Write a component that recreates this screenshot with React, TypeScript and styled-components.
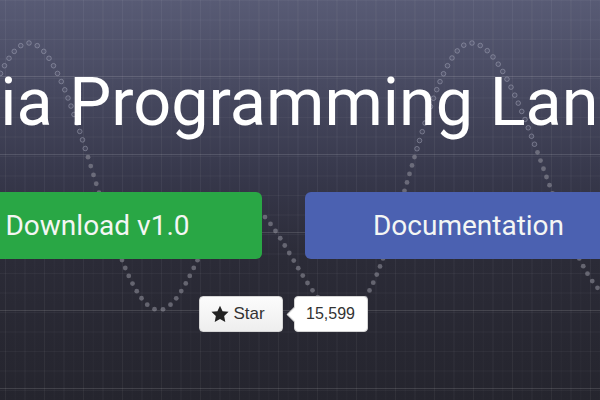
import styled, { createGlobalStyle } from "styled-components";

const GlobalStyle = createGlobalStyle`
    html, body {
        margin: 0;
        padding: 0;
        background: #25252e;
    }
`

const Page = styled.main`
    position: relative;
    width: 600px;
    height: 400px;
    overflow: hidden;
    background-color: #2a2a34;
    background-image:
        linear-gradient(to bottom, rgba(255, 255, 255, 0.13) 1px, transparent 1px),
        linear-gradient(to bottom, rgba(255, 255, 255, 0.04) 1px, transparent 1px),
        linear-gradient(to right, rgba(255, 255, 255, 0.03) 1px, transparent 1px),
        linear-gradient(to right, rgba(255, 255, 255, 0.02) 1px, transparent 1px),
        linear-gradient(180deg, #585b75 0%, #474960 22%, #36374a 45%, #2b2b37 65%, #25252e 100%);
    background-size: 100% 78px, 100% 19.5px, 19.5px 100%, 9.75px 100%, 100% 100%;
    background-position: 0 76px, 0 0, 5px 0, 5px 0, 0 0;
`

const WaveCanvas = styled.svg`
    position: absolute;
    inset: 0;
    width: 600px;
    height: 400px;
    pointer-events: none;
`

const Hero = styled.section`
    position: relative;
    width: 1000px;
    margin-left: -217px;
    padding-top: 62px;
    display: flex;
    flex-direction: column;
    align-items: center;
    font-family: Roboto, "Liberation Sans", sans-serif;
`

const Title = styled.h1`
    margin: 0 2px 0 0;
    font-size: 66.6px;
    font-weight: 400;
    line-height: 80px;
    color: #ffffff;
    white-space: nowrap;
`

const ButtonRow = styled.div`
    display: flex;
    gap: 43px;
    margin-top: 50px;
`

const BigButton = styled.a<{ $color: string }>`
    width: 328px;
    height: 67px;
    display: flex;
    align-items: center;
    justify-content: center;
    border-radius: 6px;
    background: ${props => props.$color};
    color: #f4f6f4;
    font-size: 28px;
    text-decoration: none;
`

const StarRow = styled.div`
    display: flex;
    gap: 11px;
    margin-top: 37px;
    font-family: "Liberation Sans", Arial, sans-serif;
    font-size: 16px;
    color: #333;
`

const StarButton = styled.div`
    width: 84px;
    height: 36px;
    box-sizing: border-box;
    display: flex;
    align-items: center;
    gap: 5px;
    padding-left: 11px;
    border: 1px solid #d5d5d5;
    border-radius: 4px;
    background: linear-gradient(180deg, #fcfcfc 0%, #eeeeee 100%);
    font-size: 17px;

    svg {
        width: 18px;
        height: 18px;
        fill: #222;
    }
`

const CountBox = styled.div`
    position: relative;
    width: 74px;
    height: 36px;
    box-sizing: border-box;
    display: flex;
    align-items: center;
    justify-content: center;
    border: 1px solid #d4d4d4;
    border-radius: 4px;
    background: #fff;

    &::before {
        content: "";
        position: absolute;
        left: -6px;
        top: 12px;
        width: 10px;
        height: 10px;
        background: #fff;
        border-left: 1px solid #d4d4d4;
        border-bottom: 1px solid #d4d4d4;
        transform: rotate(45deg);
    }
`

// extrema of the dotted wave, eased with cosine between them
const extrema: [number, number][] = [
    [-101, 310], [29, 43], [159, 310], [240, 202], [345, 315], [471, 43], [618, 300],
]

function waveY(x: number) {
    for (let i = 0; i < extrema.length - 1; i++) {
        const [x0, y0] = extrema[i];
        const [x1, y1] = extrema[i + 1];
        if (x >= x0 && x <= x1) {
            const t = (x - x0) / (x1 - x0);
            return y0 + (y1 - y0) * (1 - Math.cos(Math.PI * t)) / 2;
        }
    }
    return 300;
}

function waveDots() {
    const dots: { x: number, y: number }[] = [];
    let last = { x: -10, y: waveY(-10) };
    dots.push(last);
    for (let x = -10; x < 610; x += 0.25) {
        const y = waveY(x);
        if (Math.hypot(x - last.x, y - last.y) >= 8.5) {
            last = { x, y };
            dots.push(last);
        }
    }
    return dots;
}

function Wave() {
    const dots = waveDots();
    return (
        <WaveCanvas viewBox="0 0 600 400">
            {dots.map((d, i) => {
                const hollow = d.y < 150;
                return hollow ? (
                    <circle key={i} cx={d.x} cy={d.y} r={2.3} fill="rgba(150,152,170,0.12)" stroke="rgba(175,177,195,0.45)" strokeWidth={1} />
                ) : (
                    <circle key={i} cx={d.x} cy={d.y} r={2.4} fill="rgba(150,150,160,0.55)" />
                );
            })}
        </WaveCanvas>
    )
}

export default function App() {
    return (
        <Page>
            <GlobalStyle />
            <Wave />
            <Hero>
                <Title>The Julia Programming Language</Title>
                <ButtonRow>
                    <BigButton $color="#29a745">Download v1.0</BigButton>
                    <BigButton $color="#4b61b1">Documentation</BigButton>
                </ButtonRow>
                <StarRow>
                    <StarButton>
                        <svg viewBox="0 0 16 16">
                            <path d="M8 .6l2.3 4.9 5.3.6-3.9 3.7 1 5.3L8 12.5l-4.7 2.6 1-5.3L.4 6.1l5.3-.6z" />
                        </svg>
                        Star
                    </StarButton>
                    <CountBox>15,599</CountBox>
                </StarRow>
            </Hero>
        </Page>
    )
}
